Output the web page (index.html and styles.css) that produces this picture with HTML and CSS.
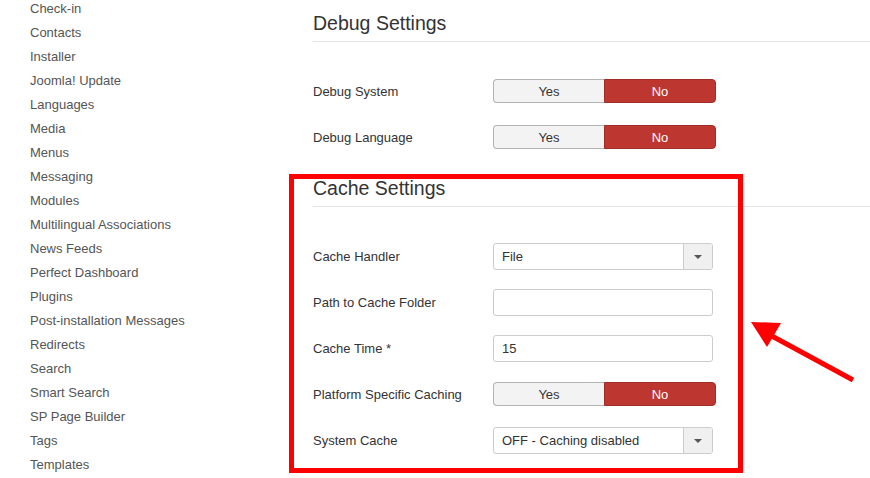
FILE: index.html
```html
<!DOCTYPE html>
<html lang="en">
<head>
  <meta charset="UTF-8" />
  <title>Global Configuration - System</title>
  <link rel="stylesheet" href="styles.css">
</head>
<body>

  <div class="page">
    <ul class="sidebar">
      <li>Check-in</li>
      <li>Contacts</li>
      <li>Installer</li>
      <li>Joomla! Update</li>
      <li>Languages</li>
      <li>Media</li>
      <li>Menus</li>
      <li>Messaging</li>
      <li>Modules</li>
      <li>Multilingual Associations</li>
      <li>News Feeds</li>
      <li>Perfect Dashboard</li>
      <li>Plugins</li>
      <li>Post-installation Messages</li>
      <li>Redirects</li>
      <li>Search</li>
      <li>Smart Search</li>
      <li>SP Page Builder</li>
      <li>Tags</li>
      <li>Templates</li>
    </ul>

    <div class="main">
      <section class="settings">
        <h3>Debug Settings</h3>
        <div class="row">
          <label>Debug System</label>
          <div class="toggle"><span class="yes">Yes</span><span class="no">No</span></div>
        </div>
        <div class="row">
          <label>Debug Language</label>
          <div class="toggle"><span class="yes">Yes</span><span class="no">No</span></div>
        </div>
      </section>

      <section class="settings">
        <h3>Cache Settings</h3>
        <div class="row">
          <label>Cache Handler</label>
          <div class="select"><span class="value">File</span><span class="caret"></span></div>
        </div>
        <div class="row">
          <label>Path to Cache Folder</label>
          <input class="text" type="text" value="">
        </div>
        <div class="row">
          <label>Cache Time *</label>
          <input class="text" type="text" value="15">
        </div>
        <div class="row">
          <label>Platform Specific Caching</label>
          <div class="toggle"><span class="yes">Yes</span><span class="no">No</span></div>
        </div>
        <div class="row">
          <label>System Cache</label>
          <div class="select"><span class="value">OFF - Caching disabled</span><span class="caret"></span></div>
        </div>
      </section>
    </div>
  </div>

  <!-- annotation over the screenshot -->
  <div class="highlight"></div>
  <svg class="arrow" width="120" height="80" viewBox="0 0 120 80">
    <line x1="113" y1="70" x2="30" y2="25" stroke="#ff0000" stroke-width="5" />
    <polygon points="11,12 41,13 27,37" fill="#ff0000" />
  </svg>

</body>
</html>
```

FILE: styles.css
```css
body {
  margin: 0;
  font-family: "Liberation Sans", Helvetica, Arial, sans-serif;
  font-size: 13px;
  color: #333;
  background: #fff;
  overflow: hidden;
}

.page {
  display: flex;
  align-items: flex-start;
}

.sidebar {
  list-style: none;
  margin: -3px 0 0 0;
  padding: 0 0 0 30px;
  width: 283px;
  flex-shrink: 0;
}

.sidebar li {
  line-height: 24px;
  color: #555;
}

.main {
  flex: 1;
  padding-top: 10px;
}

.settings {
  margin-bottom: 15px;
}

.settings h3 {
  margin: 0 0 26px 0;
  padding: 1px 0 6px 0;
  font-size: 19.5px;
  font-weight: normal;
  line-height: 24px;
  color: #333;
  border-bottom: 1px solid #e5e5e5;
}

.row {
  display: flex;
  align-items: center;
  height: 46px;
}

.row label {
  width: 180px;
  flex-shrink: 0;
}

.toggle {
  display: flex;
  width: 223px;
  height: 24px;
}

.toggle span {
  flex: 1;
  display: flex;
  align-items: center;
  justify-content: center;
  box-sizing: border-box;
}

.toggle .yes {
  background: #f3f3f3;
  border: 1px solid #b3b3b3;
  border-right: none;
  border-radius: 4px 0 0 4px;
  color: #333;
}

.toggle .no {
  background: #bd362f;
  border: 1px solid #a02d27;
  border-radius: 0 4px 4px 0;
  color: #fff;
}

.select {
  display: flex;
  width: 220px;
  height: 27px;
  border: 1px solid #ccc;
  border-radius: 3px;
  box-sizing: border-box;
  overflow: hidden;
}

.select .value {
  flex: 1;
  display: flex;
  align-items: center;
  padding-left: 8px;
  font-size: 13px;
  color: #333;
}

.select .caret {
  width: 28px;
  background: #f0f0f0;
  border-left: 1px solid #ccc;
  position: relative;
}

.select .caret::after {
  content: "";
  position: absolute;
  left: 10px;
  top: 11px;
  border-left: 4px solid transparent;
  border-right: 4px solid transparent;
  border-top: 4px solid #555;
}

.text {
  width: 220px;
  height: 27px;
  box-sizing: border-box;
  margin: 0;
  padding: 0 8px;
  border: 1px solid #ccc;
  border-radius: 3px;
  font-family: inherit;
  font-size: 13px;
  color: #333;
}

.highlight {
  position: absolute;
  left: 289px;
  top: 174px;
  width: 454px;
  height: 299px;
  box-sizing: border-box;
  border: 5px solid #ff0000;
}

.arrow {
  position: absolute;
  left: 740px;
  top: 310px;
}
```
